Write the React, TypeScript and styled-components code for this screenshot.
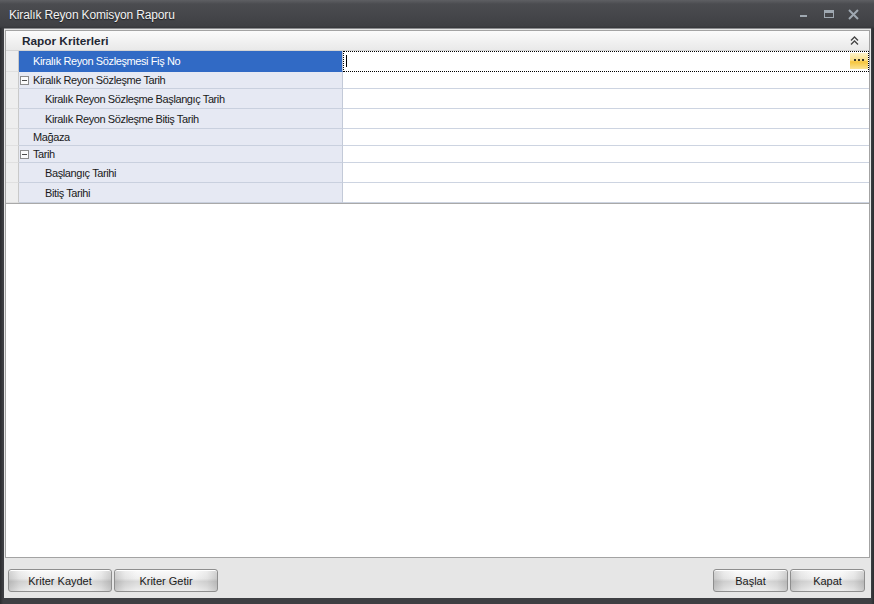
import React from "react";
import styled, { createGlobalStyle } from "styled-components";

const Global = createGlobalStyle`
  html, body { margin: 0; padding: 0; background: #2e2f32; }
  body { font-family: "Liberation Sans", Arial, sans-serif; font-size: 11px; }
  * { box-sizing: border-box; }
`;

const Window = styled.div`
  width: 874px;
  height: 604px;
  display: flex;
  flex-direction: column;
  background: linear-gradient(to right, #2a2b2e 0px, #3e3f43 3px, #3e3f43 871px, #2a2b2e 874px);
  overflow: hidden;
`;

const TitleBar = styled.div`
  height: 28px;
  flex: none;
  display: flex;
  align-items: center;
  padding: 0 9px;
  background: linear-gradient(to bottom, #5e5f63 0px, #4b4c50 4px, #3f4044 26px, #36373a 28px);
`;

const Title = styled.div`
  flex: 1;
  color: #f2f2f2;
  font-size: 12px;
  letter-spacing: -0.15px;
  text-shadow: 0 1px 1px rgba(0, 0, 0, 0.6);
  padding-top: 2px;
`;

const Controls = styled.div`
  display: flex;
  align-items: center;
  margin-right: -1px;
`;

const CtrlBtn = styled.div`
  width: 25px;
  height: 20px;
  display: flex;
  align-items: center;
  justify-content: center;
`;

const Client = styled.div`
  flex: 1;
  display: flex;
  flex-direction: column;
  margin: 0 3px 6px 4px;
  background: #e6e6e6;
  border-top: 1px solid #8a8b8e;
`;

const Panel = styled.div`
  flex: 1;
  margin: 1px 1px 0 1px;
  background: #ffffff;
  border: 1px solid #a3a3a3;
  display: flex;
  flex-direction: column;
`;

const Grid = styled.div`
  display: flex;
  flex-direction: column;
  border-bottom: 1px solid #a9a9a9;
`;

const GroupHeader = styled.div`
  height: 20px;
  display: flex;
  align-items: center;
  padding: 0 10px 0 16px;
  background: linear-gradient(to bottom, #fbfbfb, #e9e9e9);
  border-bottom: 1px solid #d4d4d4;
  font-weight: bold;
  font-size: 11.8px;
  color: #1f2733;
`;

const HeaderText = styled.div`
  flex: 1;
  padding-top: 1px;
`;

const Row = styled.div<{ $h: number }>`
  height: ${(p) => p.$h}px;
  display: flex;
`;

const Indicator = styled.div`
  width: 13px;
  flex: none;
  background: #eeeeee;
  border-right: 1px solid #c9c9c9;
  border-bottom: 1px solid #e0e0e0;
`;

const LabelCell = styled.div<{ $sel?: boolean; $indent: number }>`
  width: 324px;
  flex: none;
  display: flex;
  align-items: center;
  padding-left: ${(p) => p.$indent}px;
  background: ${(p) => (p.$sel ? "#316ac5" : "#e6e9f3")};
  color: ${(p) => (p.$sel ? "#ffffff" : "#1a1a1a")};
  border-right: 1px solid #c3cad8;
  border-bottom: 1px solid ${(p) => (p.$sel ? "#316ac5" : "#c9d0de")};
  white-space: nowrap;
  letter-spacing: -0.4px;
`;

const ExpandBox = styled.div`
  width: 9px;
  height: 9px;
  border: 1px solid #8c8c8c;
  background: #fbfbfb;
  margin: 0 4px 0 0;
  display: flex;
  align-items: center;
  justify-content: center;
  &::after {
    content: "";
    width: 5px;
    height: 1px;
    background: #4a4a4a;
  }
`;

const ValueCell = styled.div<{ $focus?: boolean }>`
  flex: 1;
  position: relative;
  display: flex;
  align-items: center;
  background: #ffffff;
  border-bottom: 1px solid #cdd4e1;
  ${(p) =>
    p.$focus
      ? `outline: 1px dotted #000; outline-offset: -1px; border-bottom-color: transparent;`
      : ""}
`;

const Caret = styled.div`
  width: 1px;
  height: 12px;
  background: #000;
  margin-left: 3px;
`;

const EllipsisBtn = styled.div`
  position: absolute;
  right: 1px;
  top: 2px;
  width: 18px;
  height: 16px;
  background: linear-gradient(to bottom, #fdf2c8 0%, #fbe08a 45%, #f6c53c 55%, #fbe393 100%);
  display: flex;
  align-items: center;
  justify-content: center;
  gap: 2px;
  padding-bottom: 2px;
`;

const Dot = styled.span`
  width: 2px;
  height: 2px;
  background: #3a3322;
`;

const ButtonBar = styled.div`
  height: 40px;
  flex: none;
  display: flex;
  align-items: flex-start;
  justify-content: space-between;
  padding: 11px 6px 0 4px;
`;

const BtnGroup = styled.div`
  display: flex;
  gap: 2px;
`;

const Button = styled.div<{ $w: number }>`
  width: ${(p) => p.$w}px;
  height: 23px;
  border: 1px solid #8e8e8e;
  border-radius: 3px;
  display: flex;
  align-items: center;
  justify-content: center;
  color: #1a1a1a;
  font-size: 11px;
  background:
    linear-gradient(to right, rgba(0,0,0,0.16) 0px, rgba(0,0,0,0.05) 10px, rgba(0,0,0,0) 22px, rgba(0,0,0,0) calc(100% - 22px), rgba(0,0,0,0.05) calc(100% - 10px), rgba(0,0,0,0.16) 100%),
    linear-gradient(to bottom, #fbfbfb 0%, #f0f0f0 40%, #d9d9d9 55%, #e4e4e4 80%, #efefef 100%);
  box-shadow: inset 0 1px 0 #ffffff;
`;

type RowDef = { label: string; h: number; indent: number; cat?: boolean; sel?: boolean };

const rows: RowDef[] = [
  { label: "Kiralık Reyon Sözleşmesi Fiş No", h: 21, indent: 14, sel: true },
  { label: "Kiralık Reyon Sözleşme Tarih", h: 17, indent: 1, cat: true },
  { label: "Kiralık Reyon Sözleşme Başlangıç Tarih", h: 20, indent: 26 },
  { label: "Kiralık Reyon Sözleşme Bitiş Tarih", h: 20, indent: 26 },
  { label: "Mağaza", h: 17, indent: 14 },
  { label: "Tarih", h: 17, indent: 1, cat: true },
  { label: "Başlangıç Tarihi", h: 20, indent: 26 },
  { label: "Bitiş Tarihi", h: 20, indent: 26 },
];

export default function App() {
  return (
    <>
      <Global />
      <Window>
        <TitleBar>
          <Title>Kiralık Reyon Komisyon Raporu</Title>
          <Controls>
            <CtrlBtn>
              <svg width="10" height="10" viewBox="0 0 10 10">
                <rect x="1" y="6" width="7" height="2" fill="#9fa8b1" />
              </svg>
            </CtrlBtn>
            <CtrlBtn>
              <svg width="10" height="10" viewBox="0 0 10 10">
                <rect x="0.5" y="1.5" width="9" height="7" fill="none" stroke="#9fa8b1" />
                <rect x="0" y="1" width="10" height="3" fill="#9fa8b1" />
              </svg>
            </CtrlBtn>
            <CtrlBtn>
              <svg width="11" height="11" viewBox="0 0 11 11">
                <path d="M1 1 L10 10 M10 1 L1 10" stroke="#9fa8b1" strokeWidth="2" />
              </svg>
            </CtrlBtn>
          </Controls>
        </TitleBar>
        <Client>
          <Panel>
            <Grid>
              <GroupHeader>
                <HeaderText>Rapor Kriterleri</HeaderText>
                <svg width="9" height="9" viewBox="0 0 9 9">
                  <path d="M1 4.5 L4.5 1 L8 4.5 M1 8.5 L4.5 5 L8 8.5" fill="none" stroke="#444" strokeWidth="1.3" />
                </svg>
              </GroupHeader>
              {rows.map((r, i) => (
                <Row key={i} $h={r.h}>
                  <Indicator />
                  <LabelCell $sel={r.sel} $indent={r.indent}>
                    {r.cat && <ExpandBox />}
                    {r.label}
                  </LabelCell>
                  <ValueCell $focus={r.sel}>
                    {r.sel && (
                      <>
                        <Caret />
                        <EllipsisBtn>
                          <Dot />
                          <Dot />
                          <Dot />
                        </EllipsisBtn>
                      </>
                    )}
                  </ValueCell>
                </Row>
              ))}
            </Grid>
          </Panel>
          <ButtonBar>
            <BtnGroup>
              <Button $w={104}>Kriter Kaydet</Button>
              <Button $w={104}>Kriter Getir</Button>
            </BtnGroup>
            <BtnGroup>
              <Button $w={75}>Başlat</Button>
              <Button $w={75}>Kapat</Button>
            </BtnGroup>
          </ButtonBar>
        </Client>
      </Window>
    </>
  );
}
